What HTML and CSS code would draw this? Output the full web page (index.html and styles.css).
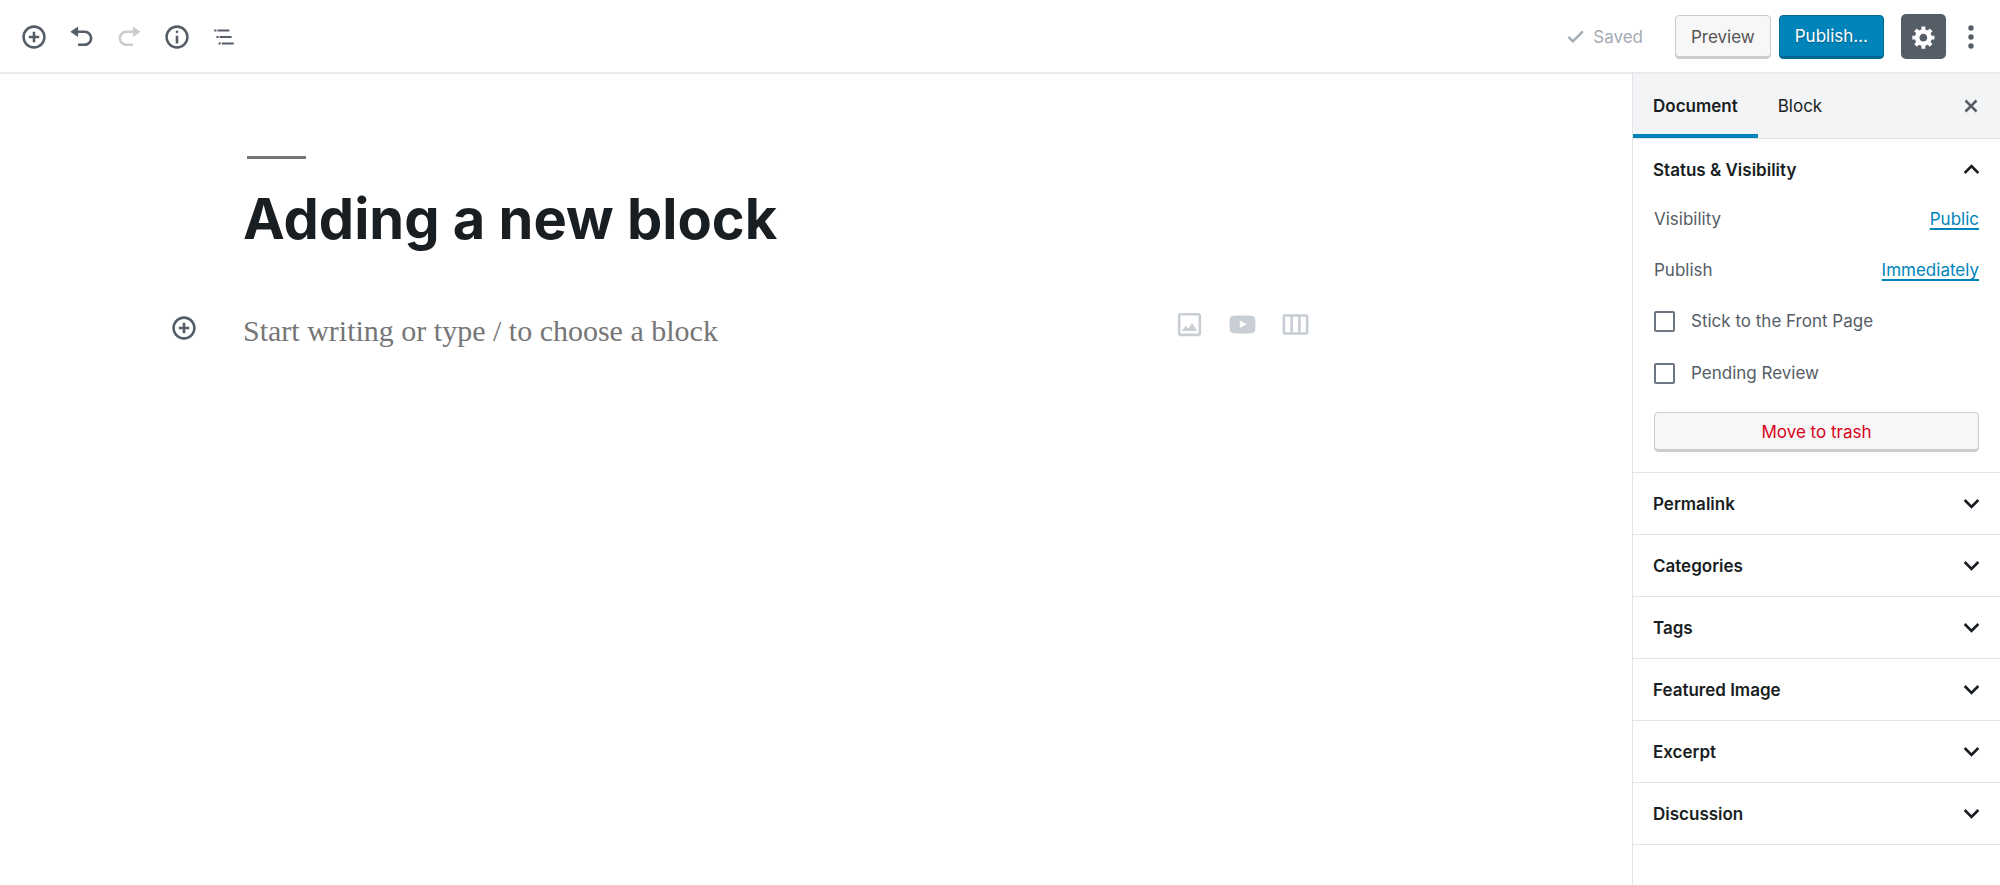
FILE: index.html
```html
<!DOCTYPE html>
<html lang="en">
<head>
<meta charset="utf-8">
<title>Adding a new block</title>
<link rel="stylesheet" href="styles.css">
</head>
<body>
<div class="editor">
  <header class="topbar">
    <div class="tools" role="toolbar" aria-label="Document tools">
      <button class="icon-btn" aria-label="Add block"><svg class="icon" viewBox="0 0 20 20"><path d="M10 1c-5 0-9 4-9 9s4 9 9 9 9-4 9-9-4-9-9-9zm0 16c-3.900 0-7-3.100-7-7s3.100-7 7-7 7 3.100 7 7-3.100 7-7 7zm1-11H9v3H6v2h3v3h2v-3h3V9h-3V6z"/></svg></button>
      <button class="icon-btn" aria-label="Undo"><svg class="icon" viewBox="0 0 20 20"><path d="M12 5H7V2L1 6l6 4V7h5c2.200 0 4 1.800 4 4s-1.800 4-4 4H7v2h5c3.300 0 6-2.700 6-6s-2.700-6-6-6z"/></svg></button>
      <button class="icon-btn" aria-label="Redo" disabled><svg class="icon" viewBox="0 0 20 20"><path d="M8 5h5V2l6 4-6 4V7H8c-2.200 0-4 1.800-4 4s1.800 4 4 4h5v2H8c-3.300 0-6-2.700-6-6s2.700-6 6-6z"/></svg></button>
      <button class="icon-btn" aria-label="Content structure"><svg class="icon" viewBox="0 0 20 20"><path d="M9 15h2V9H9v6zm1-10c-.5 0-1 .5-1 1s.5 1 1 1 1-.5 1-1-.5-1-1-1zm0-4c-5 0-9 4-9 9s4 9 9 9 9-4 9-9-4-9-9-9zm0 16c-3.900 0-7-3.100-7-7s3.100-7 7-7 7 3.100 7 7-3.100 7-7 7z"/></svg></button>
      <button class="icon-btn" aria-label="Block navigation"><svg class="icon" viewBox="0 0 24 24"><path d="M5 5H3v2h2V5zm3 8h11v-2H8v2zm9-8H6v2h11V5zM7 11H5v2h2v-2zm0 8h2v-2H7v2zm3-2v2h11v-2H10z"/></svg></button>
    </div>
    <div class="actions">
      <span class="saved"><svg class="icon-check" viewBox="0 0 24 24"><path d="M9 15.600L4.900 11.500l-1.900 1.900L9 19.400 21.400 7l-1.900-1.900z"/></svg>Saved</span>
      <button class="btn preview">Preview</button>
      <button class="btn publish">Publish…</button>
      <button class="settings" aria-label="Settings" aria-pressed="true"><svg class="icon" viewBox="0 0 20 20"><path d="M18 12h-2.180c-.17.7-.44 1.350-.81 1.930l1.540 1.540-2.100 2.100-1.540-1.540c-.58.36-1.230.63-1.910.79V19H8v-2.180c-.68-.16-1.330-.43-1.910-.79l-1.540 1.540-2.120-2.120 1.540-1.540c-.36-.58-.63-1.230-.79-1.910H1V9.030h2.170c.16-.7.44-1.350.8-1.940L2.430 5.550l2.100-2.100 1.540 1.540c.58-.37 1.240-.64 1.930-.81V2h3v2.180c.68.16 1.330.43 1.910.79l1.540-1.540 2.120 2.120-1.540 1.540c.36.59.64 1.240.8 1.940H18V12zm-8.500 1.500c1.660 0 3-1.340 3-3s-1.340-3-3-3-3 1.340-3 3 1.340 3 3 3z"/></svg></button>
      <button class="icon-btn" aria-label="More options"><svg class="icon" viewBox="0 0 26 26"><circle cx="13" cy="4" r="2.700"/><circle cx="13" cy="13" r="2.700"/><circle cx="13" cy="22" r="2.700"/></svg></button>
    </div>
  </header>
  <div class="body">
    <main class="canvas">
      <div class="content">
        <hr class="rule">
        <input class="title" type="text" aria-label="Post title" value="Adding a new block">
        <div class="block">
          <button class="icon-btn" aria-label="Add block"><svg class="icon" viewBox="0 0 20 20"><path d="M10 1c-5 0-9 4-9 9s4 9 9 9 9-4 9-9-4-9-9-9zm0 16c-3.900 0-7-3.100-7-7s3.100-7 7-7 7 3.100 7 7-3.100 7-7 7zm1-11H9v3H6v2h3v3h2v-3h3V9h-3V6z"/></svg></button>
          <input class="paragraph" type="text" aria-label="Empty block" placeholder="Start writing or type / to choose a block">
          <div class="shortcuts">
            <button class="shortcut" aria-label="Image"><svg class="icon-block" viewBox="0 0 24 24"><path d="M19 3H5c-1.100 0-2 .9-2 2v14c0 1.100.9 2 2 2h14c1.100 0 2-.9 2-2V5c0-1.100-.9-2-2-2zm0 16H5V5h14v14zM6 17l3-4 2 2 3-4 4 6z"/></svg></button>
            <button class="shortcut" aria-label="YouTube"><svg class="icon-block" viewBox="0 0 24 24"><path d="M21.800 8s-.195-1.377-.795-1.984c-.76-.797-1.613-.8-2.004-.847-2.798-.203-6.996-.203-6.996-.203h-.01s-4.197 0-6.996.202c-.39.046-1.242.05-2.003.846C2.395 6.623 2.200 8 2.200 8S2 9.620 2 11.238v1.517c0 1.618.2 3.237.2 3.237s.195 1.378.795 1.985c.76.797 1.760.77 2.205.855 1.600.153 6.800.2 6.800.2s4.203-.005 7-.208c.392-.047 1.244-.05 2.005-.847.6-.607.795-1.985.795-1.985s.2-1.618.2-3.237v-1.517C22 9.620 21.800 8 21.800 8zM9.935 14.595l-.002-5.620 5.403 2.820-5.400 2.800z"/></svg></button>
            <button class="shortcut" aria-label="Columns"><svg class="icon-block" viewBox="0 0 24 24"><path d="M21 4H3L2 5v14l1 1h18l1-1V5l-1-1zM8 18H4V6h4v12zm6 0h-4V6h4v12zm6 0h-4V6h4v12z"/></svg></button>
          </div>
        </div>
      </div>
    </main>
    <aside class="sidebar" aria-label="Editor settings">
      <div class="tabs">
        <button class="tab tab-active">Document</button>
        <button class="tab">Block</button>
        <button class="icon-btn close" aria-label="Close settings"><svg class="icon" viewBox="0 0 20 20"><path d="M14.950 6.460L11.410 10l3.540 3.540-1.410 1.410L10 11.420l-3.530 3.530-1.420-1.420L8.580 10 5.050 6.470l1.420-1.420L10 8.580l3.540-3.530z"/></svg></button>
      </div>
      <section class="panel">
        <button class="panel-toggle" aria-expanded="true">Status &amp; Visibility<svg class="chevron" viewBox="0 0 24 24"><path d="M12 8l-6 6 1.410 1.410L12 10.830l4.590 4.580L18 14z"/></svg></button>
        <div class="panel-body">
          <div class="row"><span>Visibility</span><a class="link" href="#visibility">Public</a></div>
          <div class="row"><span>Publish</span><a class="link" href="#publish">Immediately</a></div>
          <div class="checks">
            <label class="check"><input class="box" type="checkbox">Stick to the Front Page</label>
            <label class="check"><input class="box" type="checkbox">Pending Review</label>
          </div>
          <button class="btn trash">Move to trash</button>
        </div>
      </section>
      <section class="panel"><button class="panel-toggle" aria-expanded="false">Permalink<svg class="chevron" viewBox="0 0 24 24"><path d="M7.410 8.590L12 13.170l4.590-4.580L18 10l-6 6-6-6z"/></svg></button></section>
      <section class="panel"><button class="panel-toggle" aria-expanded="false">Categories<svg class="chevron" viewBox="0 0 24 24"><path d="M7.410 8.590L12 13.170l4.590-4.580L18 10l-6 6-6-6z"/></svg></button></section>
      <section class="panel"><button class="panel-toggle" aria-expanded="false">Tags<svg class="chevron" viewBox="0 0 24 24"><path d="M7.410 8.590L12 13.170l4.590-4.580L18 10l-6 6-6-6z"/></svg></button></section>
      <section class="panel"><button class="panel-toggle" aria-expanded="false">Featured Image<svg class="chevron" viewBox="0 0 24 24"><path d="M7.410 8.590L12 13.170l4.590-4.580L18 10l-6 6-6-6z"/></svg></button></section>
      <section class="panel"><button class="panel-toggle" aria-expanded="false">Excerpt<svg class="chevron" viewBox="0 0 24 24"><path d="M7.410 8.590L12 13.170l4.590-4.580L18 10l-6 6-6-6z"/></svg></button></section>
      <section class="panel"><button class="panel-toggle" aria-expanded="false">Discussion<svg class="chevron" viewBox="0 0 24 24"><path d="M7.410 8.590L12 13.170l4.590-4.580L18 10l-6 6-6-6z"/></svg></button></section>
    </aside>
  </div>
</div>
</body>
</html>
```

FILE: styles.css
```css
* {
  box-sizing: border-box;
}

body {
  margin: 0;
  background: #fff;
  color: #555d66;
  font: 17px/24px Inter, "Liberation Sans", sans-serif;
}

button,
input {
  margin: 0;
  padding: 0;
  border: 0;
  background: none;
  color: inherit;
  font: inherit;
}

button {
  cursor: pointer;
}

svg {
  display: block;
  fill: currentColor;
}

.editor {
  display: flex;
  flex-direction: column;
  min-height: 100vh;
}

.topbar {
  display: flex;
  align-items: center;
  justify-content: space-between;
  padding: 14px 16px 13px 21px;
  border-bottom: 2px solid #e8eaeb;
}

.tools {
  display: flex;
  justify-content: space-between;
  width: 216px;
}

.icon,
.icon-btn {
  width: 26px;
  height: 26px;
}

.icon-btn {
  flex: none;
}

.icon-btn:disabled {
  color: #cacdd0;
}

.actions {
  display: flex;
  align-items: center;
}

.saved {
  display: flex;
  align-items: center;
  gap: 7px;
  margin-right: 32px;
  color: #a2aab2;
}

.icon-check {
  width: 21px;
  height: 21px;
}

.btn {
  border: 1px solid #ccc;
  border-radius: 4px;
  background: #f7f7f7;
  box-shadow: inset 0 -2px 0 #ccc;
}

.preview,
.publish {
  height: 44px;
  padding: 0 15px;
}

.preview {
  margin-right: 8px;
  color: #555;
}

.publish {
  margin-right: 17px;
  padding-bottom: 2px;
  border-color: #006a95;
  background: #0085ba;
  box-shadow: inset 0 -2px 0 #006491;
  color: #fff;
  text-shadow: 0 1px 2px #005d82;
}

.settings {
  display: grid;
  place-items: center;
  width: 45px;
  height: 45px;
  margin-right: 12px;
  border-radius: 5px;
  background: #555d66;
  color: #fff;
}

.body {
  display: flex;
  flex: 1;
}

.canvas {
  flex: 1;
  min-width: 0;
}

.content {
  width: 70%;
  margin: 0 auto 0 171px;
  padding-top: 82px;
}

.rule {
  width: 59px;
  height: 3px;
  margin: 0 0 24px 76px;
  border: 0;
  background: #767676;
}

.title {
  display: block;
  width: 100%;
  padding-left: 72px;
  color: #191e23;
  font-size: 56px;
  font-weight: 700;
  line-height: 72px;
}

.block {
  display: flex;
  align-items: center;
  margin-top: 52px;
}

.paragraph {
  flex: 1;
  min-width: 0;
  padding: 6px 0 0 46px;
  font-family: "Liberation Serif", serif;
  font-size: 30px;
  line-height: 36px;
}

.paragraph::placeholder {
  color: #767676;
  opacity: 1;
}

.shortcuts {
  display: flex;
  gap: 22px;
  padding: 0 2px 8px 0;
  color: #c8ced4;
}

.icon-block {
  width: 31px;
  height: 31px;
}

.sidebar {
  width: 368px;
  border-left: 1px solid #e2e4e7;
}

.tabs {
  display: flex;
  align-items: center;
  padding-right: 16px;
  border-bottom: 1px solid #e2e4e7;
  background: #f3f4f5;
}

.tab {
  height: 64px;
  padding: 3px 20px 0;
  border-bottom: 4px solid transparent;
  color: #191e23;
}

.tab-active {
  border-bottom-color: #0085ba;
  font-weight: 600;
}

.close {
  margin-left: auto;
}

.panel {
  border-bottom: 1px solid #e2e4e7;
}

.panel-toggle {
  display: flex;
  align-items: center;
  justify-content: space-between;
  width: 100%;
  height: 61px;
  padding: 0 13px 0 20px;
  color: #191e23;
  font-weight: 600;
}

.chevron {
  width: 31px;
  height: 31px;
}

.panel-body {
  display: flex;
  flex-direction: column;
  gap: 27px;
  padding: 7px 21px 20px;
}

.row {
  display: flex;
  justify-content: space-between;
}

.link {
  color: #0085ba;
  text-decoration-thickness: 2px;
  text-decoration-skip-ink: none;
  text-underline-offset: 3px;
}

.checks {
  display: flex;
  flex-direction: column;
  gap: 28px;
}

.check {
  display: flex;
  align-items: center;
  gap: 16px;
}

.box {
  width: 21px;
  height: 21px;
  border: 2px solid #6c7781;
  border-radius: 2px;
  appearance: none;
}

.box:checked {
  background: #0085ba;
}

.trash {
  height: 40px;
  color: #d9001a;
}
```
